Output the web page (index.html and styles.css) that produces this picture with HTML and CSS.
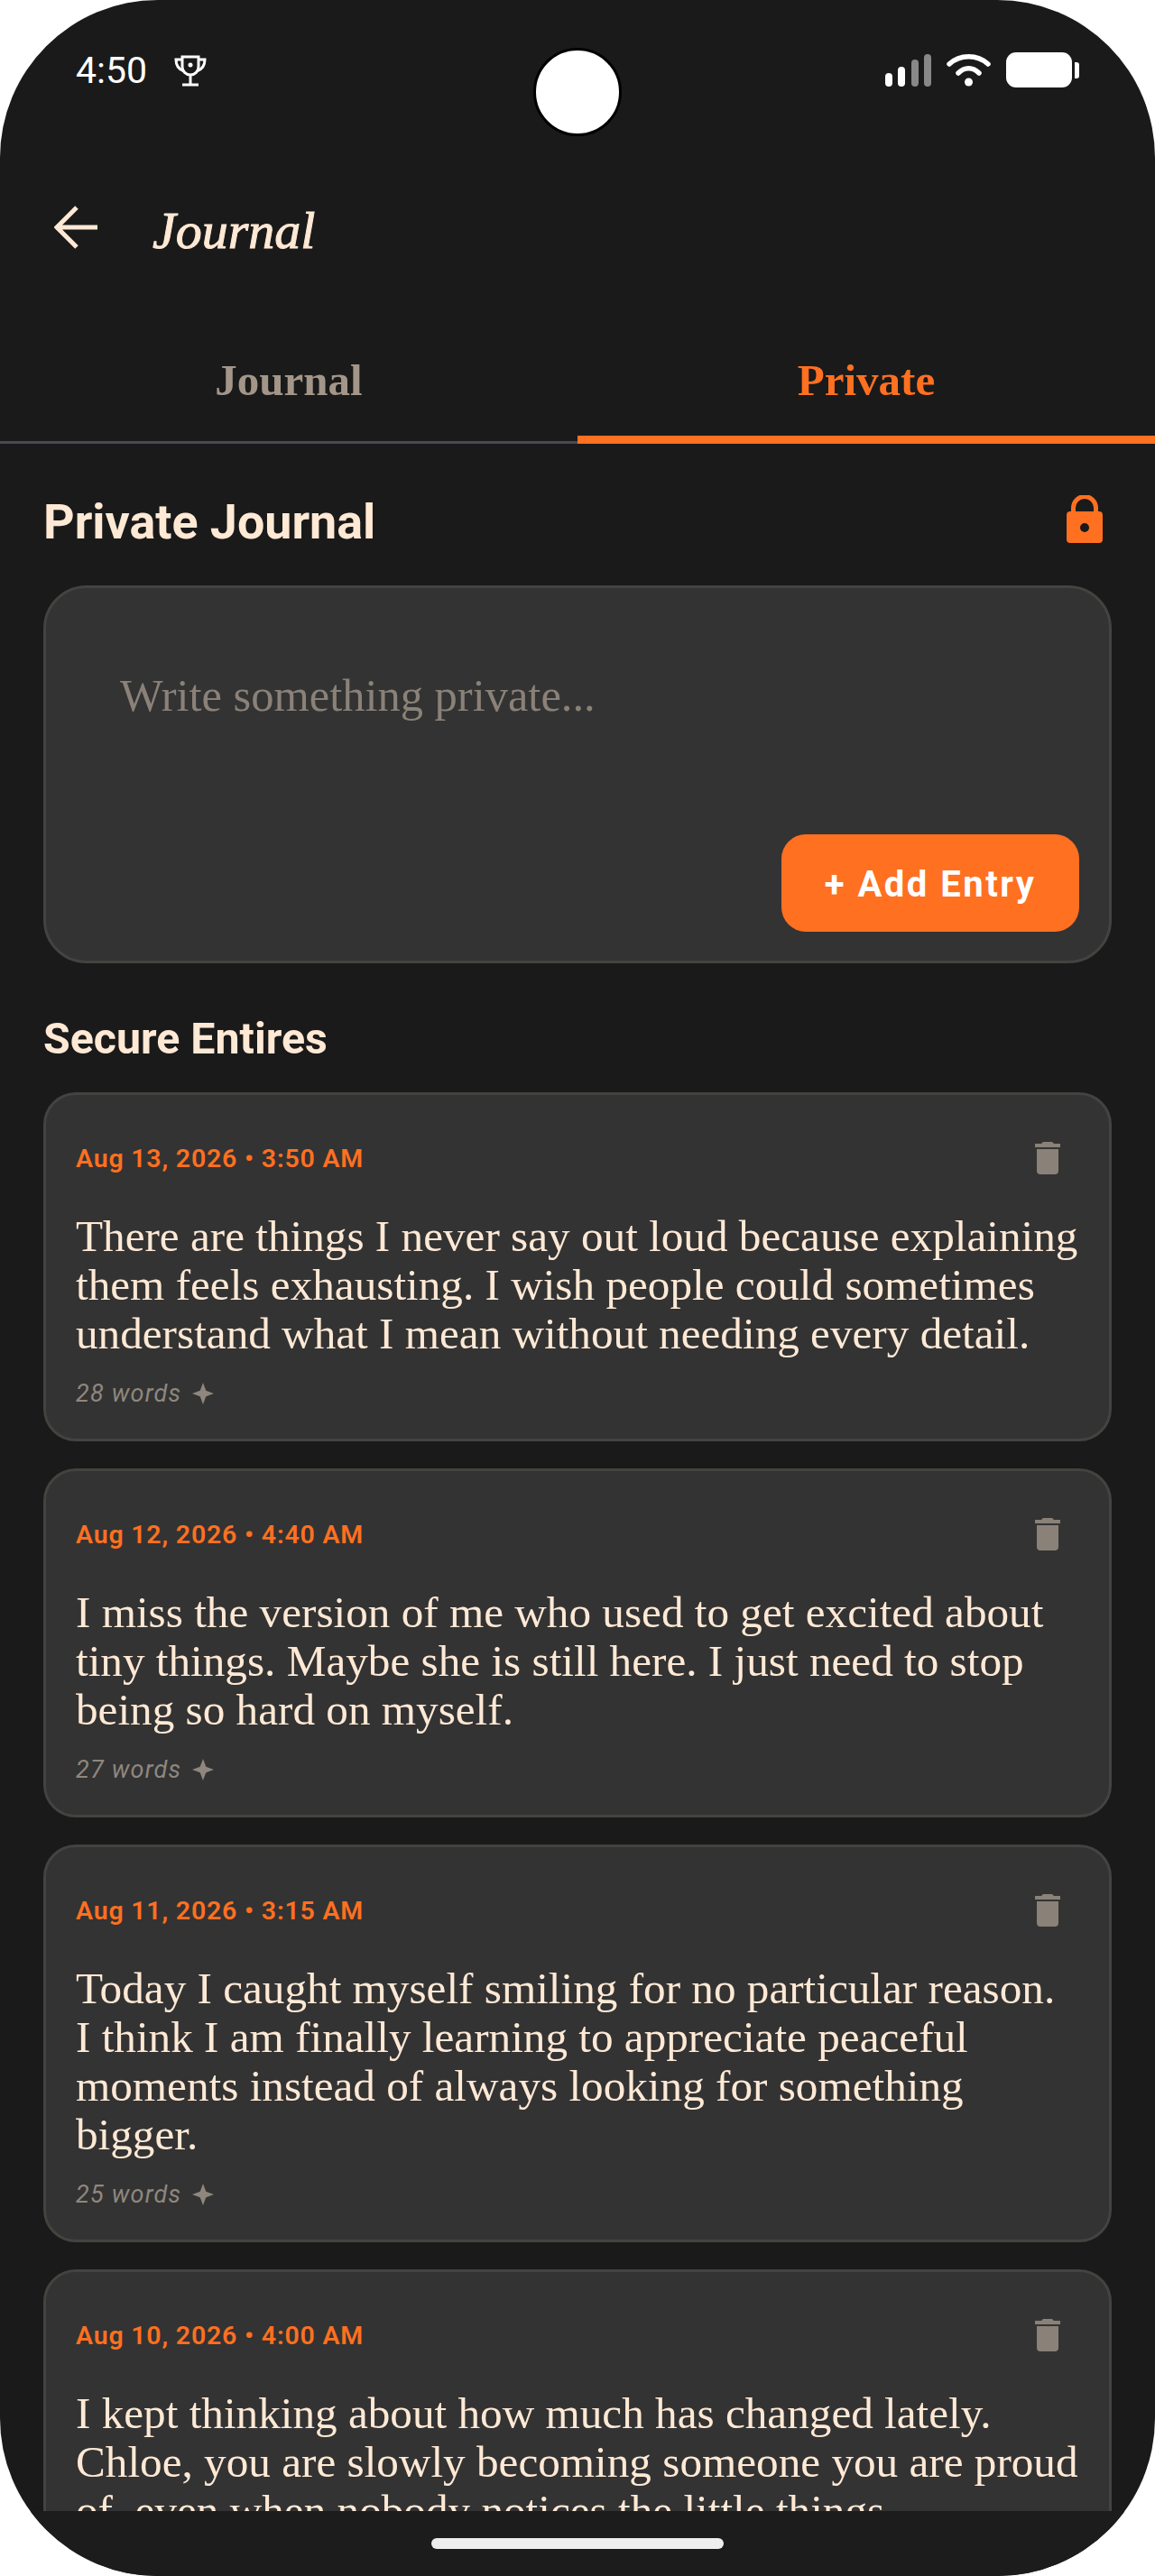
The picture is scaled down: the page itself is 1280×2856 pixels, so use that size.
FILE: index.html
```html
<!DOCTYPE html>
<html lang="en">
<head>
    <meta charset="UTF-8">
    <meta name="viewport" content="width=device-width, initial-scale=1.0">
    <title>Journal</title>
    <link rel="stylesheet" href="styles.css">
</head>
<body>
    <div class="phone">
        <div class="status-bar">
            <span class="clock">4:50</span>
            <svg class="trophy" viewBox="0 0 36 35" fill="none" stroke="#fff" stroke-width="3">
                <path d="M9 2h18v11c0 5-4 9-9 9s-9-4-9-9z"/>
                <path d="M9 5H2c0 7 3 11 9 13M27 5h7c0 7-3 11-9 13"/>
                <path d="M18 22v10M9 33h18"/>
                <circle cx="18" cy="11" r="2.5" fill="#fff" stroke="none"/>
            </svg>
            <div class="camera"></div>
            <div class="status-icons">
                <svg class="signal" viewBox="0 0 51 36">
                    <rect x="0" y="21" width="8" height="15" rx="4" fill="#fff"/>
                    <rect x="14" y="14" width="8" height="22" rx="4" fill="#fff"/>
                    <rect x="29" y="6" width="8" height="30" rx="4" fill="#888"/>
                    <rect x="43" y="0" width="8" height="36" rx="4" fill="#888"/>
                </svg>
                <svg class="wifi" viewBox="0 0 49 36" fill="none" stroke="#fff" stroke-width="5.5" stroke-linecap="round">
                    <path d="M3 11C15 0 34 0 46 11"/>
                    <path d="M13 21C20 14 29 14 36 21"/>
                    <circle cx="24.5" cy="31" r="4.5" fill="#fff" stroke="none"/>
                </svg>
                <div class="battery"></div>
            </div>
        </div>

        <div class="app-bar">
            <svg class="back" viewBox="0 0 48 48" fill="none" stroke="#ffe9d5" stroke-width="5">
                <path d="M48 24H3M25 2L3 24l22 22"/>
            </svg>
            <span class="app-title">Journal</span>
        </div>

        <div class="tabs">
            <div class="tab">Journal</div>
            <div class="tab active">Private</div>
        </div>

        <div class="content">
            <div class="section-head">
                <h1>Private Journal</h1>
                <svg class="lock" viewBox="0 0 40 53">
                    <path d="M7.500 22V14a12.500 12.500 0 0 1 25 0v8" fill="none" stroke="#ff7020" stroke-width="5"/>
                    <path fill-rule="evenodd" fill="#ff7020" d="M4 18h32a4 4 0 0 1 4 4v27a4 4 0 0 1-4 4H4a4 4 0 0 1-4-4V22a4 4 0 0 1 4-4zm16 13a5 5 0 1 0 0 10 5 5 0 0 0 0-10z"/>
                </svg>
            </div>

            <div class="composer">
                <div class="placeholder">Write something private...</div>
                <button class="add-btn">+ Add Entry</button>
            </div>

            <h2>Secure Entires</h2>

            <div class="entry">
                <div class="entry-head">
                    <span class="date">Aug 13, 2026 • 3:50 AM</span>
                    <svg class="trash" viewBox="0 0 28 36"><path d="M7 2l2-2h10l2 2h7v4H0V2zM2 8h24v24a4 4 0 0 1-4 4H6a4 4 0 0 1-4-4z"/></svg>
                </div>
                <p>There are things I never say out loud because explaining them feels exhausting. I wish people could sometimes understand what I mean without needing every detail.</p>
                <div class="words">28 words <svg class="spark" viewBox="0 0 22 22"><path d="M11 0l3 8 8 3-8 3-3 8-3-8-8-3 8-3z"/></svg></div>
            </div>

            <div class="entry">
                <div class="entry-head">
                    <span class="date">Aug 12, 2026 • 4:40 AM</span>
                    <svg class="trash" viewBox="0 0 28 36"><path d="M7 2l2-2h10l2 2h7v4H0V2zM2 8h24v24a4 4 0 0 1-4 4H6a4 4 0 0 1-4-4z"/></svg>
                </div>
                <p>I miss the version of me who used to get excited about tiny things. Maybe she is still here. I just need to stop being so hard on myself.</p>
                <div class="words">27 words <svg class="spark" viewBox="0 0 22 22"><path d="M11 0l3 8 8 3-8 3-3 8-3-8-8-3 8-3z"/></svg></div>
            </div>

            <div class="entry">
                <div class="entry-head">
                    <span class="date">Aug 11, 2026 • 3:15 AM</span>
                    <svg class="trash" viewBox="0 0 28 36"><path d="M7 2l2-2h10l2 2h7v4H0V2zM2 8h24v24a4 4 0 0 1-4 4H6a4 4 0 0 1-4-4z"/></svg>
                </div>
                <p>Today I caught myself smiling for no particular reason.<br>I think I am finally learning to appreciate peaceful moments instead of always looking for something bigger.</p>
                <div class="words">25 words <svg class="spark" viewBox="0 0 22 22"><path d="M11 0l3 8 8 3-8 3-3 8-3-8-8-3 8-3z"/></svg></div>
            </div>

            <div class="entry">
                <div class="entry-head">
                    <span class="date">Aug 10, 2026 • 4:00 AM</span>
                    <svg class="trash" viewBox="0 0 28 36"><path d="M7 2l2-2h10l2 2h7v4H0V2zM2 8h24v24a4 4 0 0 1-4 4H6a4 4 0 0 1-4-4z"/></svg>
                </div>
                <p>I kept thinking about how much has changed lately. Chloe, you are slowly becoming someone you are proud of, even when nobody notices the little things.</p>
            </div>
        </div>

        <div class="nav-bar">
            <div class="home-pill"></div>
        </div>
    </div>
</body>
</html>
```

FILE: styles.css
```css
* {
    box-sizing: border-box;
}
body {
    margin: 0;
    background: #fff;
    font-family: Roboto, sans-serif;
}
.phone {
    width: 1280px;
    height: 2856px;
    display: flex;
    flex-direction: column;
    overflow: hidden;
    background: #1a1a1a;
    border-radius: 175px;
}
.status-bar {
    height: 180px;
    flex-shrink: 0;
    padding: 58px 92px 0 84px;
    display: flex;
    align-items: flex-start;
    position: relative;
    color: #fff;
}
.clock {
    font-size: 41px;
    line-height: 40px;
    margin-top: 0;
}
.trophy {
    width: 36px;
    height: 35px;
    margin: 3px 0 0 30px;
}
.camera {
    position: absolute;
    left: 591px;
    top: 53px;
    width: 98px;
    height: 98px;
    border-radius: 50%;
    background: #fff;
    border: 3px solid #000;
}
.status-icons {
    margin-left: auto;
    display: flex;
    align-items: flex-start;
    gap: 17px;
}
.signal {
    width: 51px;
    height: 36px;
    margin-top: 2px;
}
.wifi {
    width: 49px;
    height: 36px;
    margin-top: 2px;
}
.battery {
    width: 73px;
    height: 39px;
    background: #fff;
    border-radius: 11px;
    position: relative;
}
.battery::after {
    content: "";
    position: absolute;
    left: 76px;
    top: 11px;
    width: 5px;
    height: 18px;
    background: #fff;
    border-radius: 0 3px 3px 0;
}
.app-bar {
    height: 150px;
    flex-shrink: 0;
    padding-left: 60px;
    display: flex;
    align-items: center;
}
.back {
    width: 48px;
    height: 48px;
    margin-top: -6px;
}
.app-title {
    font-family: "Liberation Serif", serif;
    font-style: italic;
    font-size: 58px;
    -webkit-text-stroke: 1px #ffe9d5;
    color: #ffe9d5;
    margin-left: 61px;
}
.tabs {
    height: 162px;
    flex-shrink: 0;
    display: flex;
    border-bottom: 3px solid #4a4852;
}
.tab {
    flex: 1;
    height: 162px;
    padding-top: 67px;
    text-align: center;
    font-family: "Liberation Serif", serif;
    font-weight: 700;
    font-size: 49px;
    line-height: 50px;
    color: #a39689;
}
.tab.active {
    color: #ff7020;
    border-bottom: 9px solid #ff7020;
}
.content {
    flex: 1;
    min-height: 0;
    overflow: hidden;
    padding: 0 48px;
}
.section-head {
    height: 157px;
    display: flex;
    justify-content: space-between;
    align-items: flex-start;
    padding-top: 57px;
}
h1 {
    margin: 0;
    font-size: 53.800px;
    line-height: 60px;
    font-weight: 700;
    color: #ffe9d5;
}
.lock {
    width: 40px;
    height: 53px;
    margin: 0 10px 0 0;
}
.composer {
    height: 419px;
    background: #333;
    border: 3px solid #444340;
    border-radius: 48px;
    padding: 91px 33px 32px 82px;
    display: flex;
    flex-direction: column;
    justify-content: space-between;
    align-items: flex-start;
}
.placeholder {
    font-family: "Liberation Serif", serif;
    font-size: 50.5px;
    line-height: 56px;
    color: #8a8178;
}
.add-btn {
    align-self: flex-end;
    width: 330px;
    height: 108px;
    padding-top: 4px;
    border: none;
    border-radius: 27px;
    background: #ff7020;
    color: #fff;
    font-family: Roboto, sans-serif;
    font-weight: 700;
    font-size: 40px;
    letter-spacing: 2.500px;
}
h2 {
    margin: 0;
    height: 143px;
    padding-top: 57px;
    font-size: 48.300px;
    line-height: 54px;
    font-weight: 700;
    color: #ffe9d5;
}
.entry {
    background: #333;
    border: 3px solid #444340;
    border-radius: 36px;
    padding: 55px 33px 34px 33px;
    margin-bottom: 30px;
}
.entry-head {
    display: flex;
    justify-content: space-between;
    align-items: flex-start;
    height: 75px;
}
.date {
    font-size: 28.500px;
    line-height: 32px;
    font-weight: 600;
    letter-spacing: 0.8px;
    color: #ff7020;
}
.trash {
    width: 28px;
    height: 36px;
    margin: -3px 21px 0 0;
    fill: #8a8178;
}
.entry p {
    margin: 0;
    font-family: "Liberation Serif", serif;
    font-size: 49.200px;
    line-height: 54px;
    color: #ffe9d5;
}
.words {
    margin-top: 23px;
    display: flex;
    align-items: center;
    gap: 12px;
    font-size: 27px;
    line-height: 32px;
    font-style: italic;
    letter-spacing: 1.200px;
    color: #8f877e;
}
.spark {
    width: 24px;
    height: 24px;
    fill: #8f877e;
}
.nav-bar {
    height: 72px;
    flex-shrink: 0;
    background: #1c1c1c;
    display: flex;
    justify-content: center;
    padding-top: 30px;
}
.home-pill {
    width: 324px;
    height: 12px;
    background: #eee;
    border-radius: 6px;
}
```
